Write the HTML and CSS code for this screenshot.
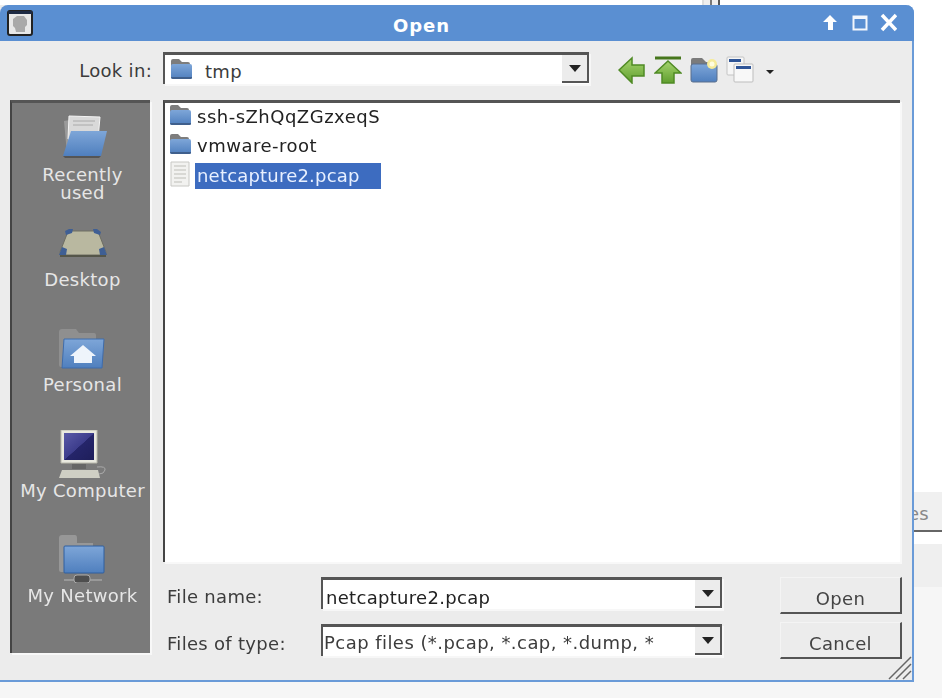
FILE: index.html
```html
<!DOCTYPE html>
<html lang="en">
  <head>
    <meta charset="UTF-8" />
    <title>Open</title>
    <link rel="stylesheet" href="styles.css">
  </head>

  <body>
    <svg class="defs" width="0" height="0">
      <defs>
        <linearGradient id="blue" x1="0" y1="0" x2="0" y2="1">
          <stop offset="0" stop-color="#7ea6d8" />
          <stop offset="1" stop-color="#4f7fbe" />
        </linearGradient>
        <linearGradient id="green" x1="0" y1="0" x2="0" y2="1">
          <stop offset="0" stop-color="#a6d46e" />
          <stop offset="1" stop-color="#5f9e2e" />
        </linearGradient>
        <linearGradient id="screen" x1="0" y1="0" x2="1" y2="1">
          <stop offset="0" stop-color="#5a5aa8" />
          <stop offset="0.5" stop-color="#3d3d8c" />
          <stop offset="0.51" stop-color="#25256a" />
          <stop offset="1" stop-color="#1e1e5a" />
        </linearGradient>
        <symbol id="folder" viewBox="0 0 22 22">
          <path d="M1 3q0-2 2-2h6l3 3h6q2 0 2 2v3H1z" fill="#7d7d7d" />
          <rect x="1" y="6" width="21" height="15" rx="2" fill="url(#blue)" />
          <path d="M1 19h21v1q0 1-2 1H3q-2 0-2-2z" fill="#3f5f8c" />
        </symbol>
      </defs>
    </svg>

    <!-- window behind the dialog -->
    <div class="behind-top"></div>
    <div class="behind-tab"><span>es</span></div>
    <div class="behind-panel"></div>
    <div class="behind-floor"></div>

    <div class="window">
      <div class="titlebar">
        <svg class="app-icon" width="26" height="26" viewBox="0 0 26 26">
          <rect x="1" y="1" width="24" height="24" rx="2" fill="#e8e8e8" stroke="#222" stroke-width="2" />
          <rect x="1" y="1" width="24" height="3" fill="#1d2a44" />
          <path d="M6 9l4-3h7l3 4v5l-2 2v5H9l-1-4-2-2z" fill="#a9a9a9" />
        </svg>
        <span class="title">Open</span>
        <svg class="title-btn" width="75" height="20" viewBox="0 0 75 20">
          <path d="M8 2l7 7h-4v8H6V9H1z" fill="#fff" />
          <rect x="31.500" y="3.500" width="13" height="13" fill="none" stroke="#f2f6fc" stroke-width="2" />
          <path d="M31 5h14" stroke="#f2f6fc" stroke-width="2" />
          <path d="M60 2l14 15M74 2L60 17" stroke="#fff" stroke-width="3.500" />
        </svg>
      </div>

      <div class="toolbar">
        <label class="look-label">Look in:</label>
        <div class="combo look-combo">
          <div class="combo-value">
            <svg class="look-icon" width="22" height="22"><use href="#folder" /></svg>
            <span>tmp</span>
          </div>
          <div class="combo-btn"><i class="arrow"></i></div>
        </div>
        <div class="tools">
          <svg width="28" height="28" viewBox="0 0 28 28">
            <path d="M1 14L14 2v7h12v11H14v7z" fill="url(#green)" stroke="#4f8a24" stroke-width="1.500" />
          </svg>
          <svg width="28" height="28" viewBox="0 0 28 28">
            <path d="M1 2h26" stroke="#46761c" stroke-width="3" />
            <path d="M14 5l13 12h-7v10H8V17H1z" fill="url(#green)" stroke="#4f8a24" stroke-width="1.500" />
          </svg>
          <svg width="28" height="28" viewBox="0 0 28 28">
            <path d="M1 4q0-2 2-2h9l4 4h8q2 0 2 2v4H1z" fill="#7b7b7b" />
            <rect x="1" y="8" width="26" height="18" rx="2" fill="url(#blue)" stroke="#5a6f8c" />
            <circle cx="22" cy="8" r="5" fill="#f6eb9a" />
            <circle cx="22" cy="8" r="2.500" fill="#fffde0" />
          </svg>
          <svg width="28" height="28" viewBox="0 0 28 28">
            <rect x="1" y="1" width="17" height="18" rx="1" fill="#f6f6f6" stroke="#c4c4c4" />
            <rect x="3" y="3" width="12" height="3" fill="#2f5597" />
            <rect x="8" y="8" width="19" height="18" rx="1" fill="#f8f8f8" stroke="#bdbdbd" />
            <rect x="10" y="10" width="15" height="3" fill="#2f5597" />
          </svg>
          <i class="tool-arrow"></i>
        </div>
      </div>

      <div class="main">
        <div class="sidebar">
          <div class="place place-first">
            <svg class="place-icon" viewBox="0 0 48 48">
              <path d="M5 8l6-1v34H8z" fill="#9a9a9a" />
              <path d="M10 3l31 1-2 22H9z" fill="#d9d9d9" stroke="#f4f4f4" />
              <path d="M14 8h22M14 12h20" stroke="#aaa" />
              <path d="M12 18h36l-6 25H4z" fill="url(#blue)" />
              <path d="M4 43h38l-2 2H6z" fill="#555" />
            </svg>
            <span class="place-label">Recently<br />used</span>
          </div>
          <div class="place">
            <svg class="place-icon" viewBox="0 0 48 48">
              <path d="M8 14q1-3 4-3h24q3 0 4 3l7 18q1 3-2 3H3q-3 0-2-3z" fill="#b9b8a0" stroke="#6e6e62" />
              <path d="M6 11l4-2h4l-1 4-6 2zM34 9h4l4 3-1 3-6-2zM3 27l5 2-1 6H0zM45 27l3 8h-7l-1-6z" fill="#3f5f94" />
              <path d="M1 36h46" stroke="#55564a" stroke-width="2" />
            </svg>
            <span class="place-label">Desktop</span>
          </div>
          <div class="place">
            <svg class="place-icon" viewBox="0 0 48 48">
              <path d="M0 7q0-3 3-3h14l3 4h15q2 0 2 2v4H0zM0 10h6v32H2q-2 0-2-2z" fill="#8f8f8f" />
              <path d="M5 14h40l-2 29H3z" fill="url(#blue)" stroke="#3f6cab" />
              <path d="M24 20l13 11h-4v7H15v-7h-4z" fill="#eef4fb" />
            </svg>
            <span class="place-label">Personal</span>
          </div>
          <div class="place place-low">
            <svg class="place-icon" viewBox="0 0 48 48">
              <path d="M2 0h36v33H2z" fill="#e9e9df" stroke="#b9b9ac" />
              <rect x="5" y="3" width="30" height="27" fill="url(#screen)" />
              <path d="M13 34h14v5H13z" fill="#666" />
              <path d="M3 40h36l2 8H0z" fill="#cfcfc4" />
              <path d="M38 37q9-1 8 3t-6 4" fill="none" stroke="#aaa" />
            </svg>
            <span class="place-label">My Computer</span>
          </div>
          <div class="place place-low">
            <svg class="place-icon" viewBox="0 0 48 48">
              <path d="M0 3q0-3 3-3h13q2 0 2 3v5h16v3H6v26H2q-2 0-2-2z" fill="#979797" />
              <rect x="5" y="11" width="40" height="27" rx="1" fill="url(#blue)" stroke="#2f5f9f" />
              <path d="M5 45h38" stroke="#999" stroke-width="2" />
              <rect x="15" y="40" width="16" height="8" rx="3" fill="#4e4e4e" stroke="#a9a9a9" />
            </svg>
            <span class="place-label">My Network</span>
          </div>
        </div>

        <div class="right">
          <div class="list">
            <div class="file">
              <svg class="file-icon" width="22" height="22"><use href="#folder" /></svg>
              <span class="file-name">ssh-sZhQqZGzxeqS</span>
            </div>
            <div class="file">
              <svg class="file-icon" width="22" height="22"><use href="#folder" /></svg>
              <span class="file-name">vmware-root</span>
            </div>
            <div class="file">
              <svg class="file-icon" width="22" height="26" viewBox="0 0 22 26">
                <path d="M2 1h18v24H2z" fill="#f2f2f0" stroke="#c8c8c4" />
                <path d="M5 5h12M5 9h12M5 13h12M5 17h12M5 21h8" stroke="#d8d8d4" stroke-width="2" />
              </svg>
              <span class="file-name selected">netcapture2.pcap</span>
            </div>
          </div>

          <div class="form">
            <div class="fields">
              <div class="field">
                <label class="field-label">File name:</label>
                <div class="combo field-combo">
                  <div class="combo-value field-text">netcapture2.pcap</div>
                  <div class="combo-btn"><i class="arrow"></i></div>
                </div>
              </div>
              <div class="field">
                <label class="field-label">Files of type:</label>
                <div class="combo field-combo">
                  <div class="combo-value type-text">Pcap files (*.pcap, *.cap, *.dump, *</div>
                  <div class="combo-btn"><i class="arrow"></i></div>
                </div>
              </div>
            </div>
            <div class="buttons">
              <button class="btn">Open</button>
              <button class="btn">Cancel</button>
            </div>
          </div>
        </div>
      </div>

      <svg class="grip" width="24" height="24" viewBox="0 0 24 24">
        <path d="M1 23L23 1M8 23L23 8M15 23l8-8" stroke="#666" stroke-width="1.500" />
      </svg>
    </div>
  </body>
</html>
```

FILE: styles.css
```css
html,
body {
  margin: 0;
  height: 100%;
}

body {
  position: relative;
  width: 942px;
  height: 698px;
  overflow: hidden;
  background: #fff;
  font-family: "DejaVu Sans", sans-serif;
  font-size: 18px;
  letter-spacing: 0.3px;
  color: #3c3c3c;
}

.defs {
  position: absolute;
}

.behind-top {
  position: absolute;
  left: 702px;
  top: 0;
  width: 14px;
  height: 6px;
  border-left: 2px solid #ddd;
  border-right: 2px solid #555;
  background: linear-gradient(90deg, #eee 45%, #777 45%, #777 55%, #eee 55%);
}

.behind-tab {
  position: absolute;
  left: 900px;
  top: 492px;
  width: 42px;
  height: 38px;
  background: #f0f0f0;
  border-bottom: 2px solid #666;
  color: #888;
  line-height: 44px;
}

.behind-tab span {
  margin-left: 8px;
  display: block;
}

.behind-panel {
  position: absolute;
  left: 900px;
  top: 544px;
  width: 42px;
  height: 43px;
  background: #efefef;
}

.behind-floor {
  position: absolute;
  left: 0;
  right: 0;
  top: 587px;
  bottom: 0;
  background: #f6f6f6;
}

/* dialog */
.window {
  position: absolute;
  left: 0;
  top: 5px;
  width: 914px;
  height: 677px;
  box-sizing: border-box;
  background: #ececec;
  border-right: 2px solid #6a9bd8;
  border-bottom: 2px solid #6a9bd8;
  border-radius: 0 8px 0 0;
  filter: blur(0.6px);
}

.titlebar {
  display: flex;
  align-items: center;
  height: 36px;
  padding: 0 17px 0 7px;
  margin-right: -2px;
  background: #5a8fd2;
  border-radius: 8px 8px 0 0;
}

.title {
  flex: 1;
  padding: 5px 12px 0 0;
  text-align: center;
  color: #fff;
  font-weight: bold;
  letter-spacing: 1px;
}

.toolbar {
  display: flex;
  align-items: center;
  height: 32px;
  margin-top: 11px;
}

.look-label {
  width: 152px;
  padding-top: 4px;
  text-align: right;
  margin-right: 11px;
}

.combo {
  display: flex;
  box-sizing: border-box;
  background: #fff;
  border-top: 3px solid #555;
  border-left: 2px solid #555;
  box-shadow: 2px 2px 0 #f7f7f7;
}

.look-combo {
  width: 426px;
  height: 32px;
}

.combo-value {
  flex: 1;
  display: flex;
  align-items: center;
  overflow: hidden;
  white-space: nowrap;
}

.look-icon {
  margin: -2px 0 0 5px;
}

.look-combo span {
  margin-left: 13px;
  padding-top: 4px;
}

.combo-btn {
  display: flex;
  align-items: center;
  justify-content: center;
  width: 25px;
  height: 26px;
  background: #ececec;
  border-right: 2px solid #555;
  border-bottom: 2px solid #555;
}

.arrow {
  width: 0;
  height: 0;
  border-left: 6px solid transparent;
  border-right: 6px solid transparent;
  border-top: 7px solid #222;
}

.tools {
  display: flex;
  align-items: center;
  gap: 8px;
  margin-left: 29px;
  padding-top: 4px;
}

.tool-arrow {
  width: 0;
  height: 0;
  margin: 4px 0 0 4px;
  border-left: 4px solid transparent;
  border-right: 4px solid transparent;
  border-top: 4px solid #222;
}

.main {
  display: flex;
  margin-top: 16px;
}

.sidebar {
  box-sizing: border-box;
  width: 140px;
  height: 553px;
  margin-left: 10px;
  padding-top: 11px;
  background: #7a7a7a;
  border-top: 3px solid #555;
  border-left: 2px solid #444;
  box-shadow: 2px 2px 0 #f8f8f8;
}

.place {
  display: flex;
  flex-direction: column;
  align-items: center;
  height: 105px;
  margin-left: 3px;
}

.place-first {
  height: 106px;
}

.place-icon {
  width: 48px;
  height: 48px;
  flex: none;
}

.place-first .place-icon {
  margin-top: -1px;
}

.place-label {
  margin-top: 3px;
  line-height: 18px;
  text-align: center;
  white-space: nowrap;
  color: #e6e6e6;
}

.place-first .place-label {
  margin-top: 5px;
}

.place-low .place-label {
  margin-top: 4px;
}

.right {
  flex: 1;
  margin-left: 13px;
}

.list {
  box-sizing: border-box;
  width: 737px;
  height: 462px;
  padding: 0 0 0 4px;
  background: #fff;
  border-top: 3px solid #555;
  border-left: 2px solid #444;
  box-shadow: 2px 2px 0 #f8f8f8;
}

.file {
  display: flex;
  align-items: center;
  height: 29.5px;
}

.file-icon {
  flex: none;
  margin-bottom: 6px;
}

.file-name {
  margin: 0 0 2px 4px;
  padding: 0 2px;
  color: #222;
  line-height: 26px;
  letter-spacing: 0.5px;
}

.selected {
  box-sizing: border-box;
  width: 186px;
  background: #3d6cc0;
  color: #e8f0ff;
  letter-spacing: 0.2px;
}

.form {
  display: flex;
  margin-top: 15px;
}

.fields {
  display: flex;
  flex-direction: column;
  gap: 15px;
}

.field {
  display: flex;
  align-items: center;
}

.field-label {
  width: 158px;
  padding: 7px 0 0 4px;
  box-sizing: border-box;
}

.field-combo {
  width: 401px;
  height: 32px;
}

.field-text {
  padding: 6px 0 0 3px;
  color: #222;
}

.type-text {
  padding: 1px 0 0 1px;
  color: #3c3c3c;
  letter-spacing: 0.45px;
}

.buttons {
  display: flex;
  flex-direction: column;
  gap: 8px;
  margin-left: 58px;
}

.btn {
  box-sizing: border-box;
  width: 122px;
  height: 37px;
  padding: 7px 0 0;
  background: #ececec;
  border: 0;
  border-top: 1px solid #f4f4f4;
  border-left: 1px solid #f4f4f4;
  border-right: 2px solid #555;
  border-bottom: 2px solid #555;
  font-family: inherit;
  font-size: 18px;
  letter-spacing: 0.3px;
  color: #444;
}

.grip {
  position: absolute;
  right: 0;
  bottom: 0;
}
```
